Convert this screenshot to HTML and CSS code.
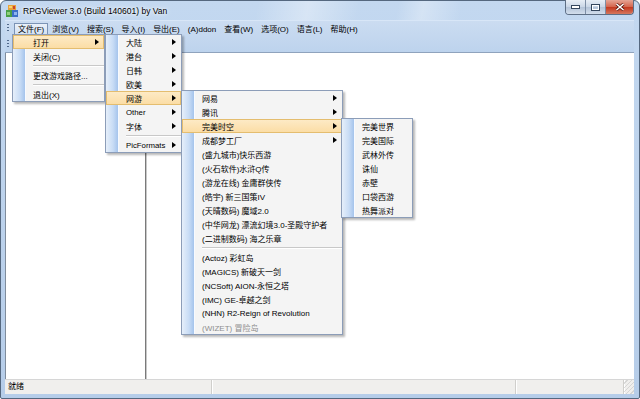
FILE: index.html
```html
<!DOCTYPE html>
<html lang="zh-CN">
<head>
    <meta charset="UTF-8">
    <title>RPGViewer 3.0</title>
    <link rel="stylesheet" href="styles.css">
</head>
<body>
    <div class="window">
        <div class="titlebar">
            <svg class="app-icon" width="14" height="14" viewBox="0 0 14 14">
                <rect x="3" y="1" width="8" height="5" fill="#e9a13b"/>
                <rect x="4" y="2" width="3" height="2" fill="#f7d36b"/>
                <rect x="8" y="2" width="2" height="3" fill="#c9462f"/>
                <rect x="1" y="6" width="6" height="7" fill="#4aa046"/>
                <rect x="7" y="6" width="6" height="7" fill="#3a6fc6"/>
                <rect x="2" y="8" width="3" height="3" fill="#8fd07c"/>
                <rect x="9" y="8" width="3" height="3" fill="#8db4ee"/>
            </svg>
            <span class="title">RPGViewer 3.0 (Build 140601) by Van</span>
            <div class="caption-buttons">
                <span class="cb cb-min">
                    <svg width="9" height="4" viewBox="0 0 9 4"><rect x="0.5" y="0.5" width="8" height="3" fill="#fff" stroke="#35475e" stroke-width="1"/></svg>
                </span>
                <span class="cb cb-max">
                    <svg width="9" height="7" viewBox="0 0 9 7"><rect x="0.5" y="0.5" width="8" height="6" fill="none" stroke="#35475e" stroke-width="1"/><rect x="1.5" y="1.5" width="6" height="4" fill="none" stroke="#fff" stroke-width="1"/></svg>
                </span>
                <span class="cb cb-close">
                    <svg width="10" height="8" viewBox="0 0 10 8"><path d="M1.5 1 L8.5 7 M8.5 1 L1.5 7" stroke="#5b1a12" stroke-width="3"/><path d="M1.5 1 L8.5 7 M8.5 1 L1.5 7" stroke="#fff" stroke-width="1.6"/></svg>
                </span>
            </div>
        </div>

        <div class="frame">
            <div class="rebar">
                <div class="band menubar">
                    <span class="grip"></span>
                    <span class="menu-title active">文件(F)</span>
                    <span class="menu-title">浏览(V)</span>
                    <span class="menu-title">搜索(S)</span>
                    <span class="menu-title">导入(I)</span>
                    <span class="menu-title">导出(E)</span>
                    <span class="menu-title">(A)ddon</span>
                    <span class="menu-title">查看(W)</span>
                    <span class="menu-title">选项(O)</span>
                    <span class="menu-title">语言(L)</span>
                    <span class="menu-title">帮助(H)</span>
                </div>
                <div class="band toolbar">
                    <span class="grip"></span>
                </div>
            </div>

            <div class="client">
                <div class="tree"></div>
                <div class="view"></div>
            </div>

            <div class="statusbar">
                <div class="pane pane-main">就绪</div>
                <div class="pane pane-mid"></div>
                <div class="pane pane-end"></div>
                <div class="sizegrip"></div>
            </div>
        </div>
    </div>

    <!-- 弹出菜单 -->
    <div class="popup menu-file">
        <div class="item hl">打开<i class="arrow"></i></div>
        <div class="item">关闭(C)</div>
        <div class="sep"></div>
        <div class="item">更改游戏路径...</div>
        <div class="sep"></div>
        <div class="item">退出(X)</div>
    </div>

    <div class="popup menu-open">
        <div class="item">大陆<i class="arrow"></i></div>
        <div class="item">港台<i class="arrow"></i></div>
        <div class="item">日韩<i class="arrow"></i></div>
        <div class="item">欧美<i class="arrow"></i></div>
        <div class="item hl">网游<i class="arrow"></i></div>
        <div class="item latin">Other<i class="arrow"></i></div>
        <div class="item">字体<i class="arrow"></i></div>
        <div class="sep"></div>
        <div class="item latin">PicFormats<i class="arrow"></i></div>
    </div>

    <div class="popup menu-online">
        <div class="item">网易<i class="arrow"></i></div>
        <div class="item">腾讯<i class="arrow"></i></div>
        <div class="item hl">完美时空<i class="arrow"></i></div>
        <div class="item">成都梦工厂<i class="arrow"></i></div>
        <div class="item">(盛九城市)快乐西游</div>
        <div class="item">(火石软件)水浒Q传</div>
        <div class="item">(游龙在线) 金庸群侠传</div>
        <div class="item">(皓宇) 新三国策IV</div>
        <div class="item">(天晴数码) 魔域2.0</div>
        <div class="item">(中华网龙) 漂流幻境3.0-圣殿守护者</div>
        <div class="item">(二进制数码) 海之乐章</div>
        <div class="sep"></div>
        <div class="item">(Actoz) 彩虹岛</div>
        <div class="item">(MAGICS) 新破天一剑</div>
        <div class="item">(NCSoft) AION-永恒之塔</div>
        <div class="item">(IMC) GE-卓越之剑</div>
        <div class="item">(NHN) R2-Reign of Revolution</div>
        <div class="item disabled">(WIZET) 冒险岛</div>
    </div>

    <div class="popup menu-wanmei">
        <div class="item">完美世界</div>
        <div class="item">完美国际</div>
        <div class="item">武林外传</div>
        <div class="item">诛仙</div>
        <div class="item">赤壁</div>
        <div class="item">口袋西游</div>
        <div class="item">热舞派对</div>
    </div>
</body>
</html>
```

FILE: styles.css
```css
* {
    box-sizing: border-box;
    margin: 0;
    padding: 0;
}

body {
    position: relative;
    width: 640px;
    height: 399px;
    overflow: hidden;
    background: #fff;
    font-family: "Liberation Sans", "Noto Sans CJK SC", sans-serif;
    font-size: 8px;
    color: #000;
}

.window {
    width: 640px;
    height: 399px;
    display: flex;
    flex-direction: column;
    border: 1px solid #55687f;
    border-radius: 6px 6px 2px 2px;
    background: linear-gradient(#c3d8f0, #b6cde9);
}

/* 标题栏 */
.titlebar {
    height: 19px;
    display: flex;
    align-items: center;
    padding-left: 4px;
    background:
        linear-gradient(100deg, transparent 40%, rgba(255,255,255,0.35) 48%, transparent 56%),
        linear-gradient(100deg, transparent 62%, rgba(255,255,255,0.3) 66%, transparent 72%);
}

.app-icon {
    margin-right: 4px;
}

.title {
    font-size: 8.5px;
    color: #000;
    text-shadow: 0 0 6px #fff, 0 0 3px #fff;
}

.caption-buttons {
    margin-left: auto;
    margin-right: 5px;
    align-self: flex-start;
    display: flex;
    height: 15px;
    margin-top: -1px;
    border: 1px solid #5e6f85;
    border-top: none;
    border-radius: 0 0 4px 4px;
    overflow: hidden;
}

.cb {
    display: flex;
    align-items: center;
    justify-content: center;
    height: 100%;
}

.cb-min,
.cb-max {
    width: 20px;
    background: linear-gradient(#e8eef6, #c9d6e6 50%, #b3c3d8 51%, #d2deec);
    border-right: 1px solid #7d8ea5;
}

.cb-close {
    width: 27px;
    background: linear-gradient(#e5a495, #d4644c 50%, #c3371e 51%, #d5785e);
}

/* 框架 */
.frame {
    flex: 1;
    display: flex;
    flex-direction: column;
    padding: 0 5px 4px 4px;
}

.rebar {
    height: 33px;
    background: linear-gradient(#cbdcf1, #bdd3ed);
    border-top: 1px solid #d8e6f7;
    border-bottom: 1px solid #8fa3bd;
}

.band {
    display: flex;
    align-items: center;
}

.menubar {
    height: 15px;
    padding-left: 2px;
}

.toolbar {
    height: 16px;
    padding-left: 2px;
}

.grip {
    width: 2px;
    height: 9px;
    margin-right: 5px;
    background: repeating-linear-gradient(#526a8c 0 1px, transparent 1px 3px);
}

.menu-title {
    height: 12px;
    line-height: 11px;
    padding: 0 3px;
    border: 1px solid transparent;
    white-space: nowrap;
}

.menu-title.active {
    border-color: #7b93b5;
    background: linear-gradient(#e9f0f9, #d5e2f2);
}

/* 客户区 */
.client {
    flex: 1;
    display: flex;
    background: #fff;
}

.tree {
    width: 141px;
    border-left: 1px solid #7f8c9c;
    border-right: 1px solid #7a7a7a;
    box-shadow: 1px 0 0 #c8c8c8;
}

.view {
    flex: 1;
}

/* 状态栏 */
.statusbar {
    height: 15px;
    display: flex;
    background: #f0efed;
    border-top: 1px solid #d6d6d6;
    line-height: 13px;
}

.pane {
    border-right: 1px solid #d0cfcc;
    box-shadow: 1px 0 0 #fff;
}

.pane-main {
    width: 207px;
    padding-left: 3px;
}

.pane-mid {
    width: 304px;
}

.pane-end {
    flex: 1;
}

.sizegrip {
    width: 10px;
    background: repeating-linear-gradient(135deg, transparent 0 2px, #c4c4c4 2px 3px);
    opacity: 0.6;
}

/* 弹出菜单 */
.popup {
    position: absolute;
    border: 1px solid #8c9db8;
    box-shadow: 2px 2px 2px rgba(0, 0, 0, 0.28);
    background: linear-gradient(to right, #e6effa 0, #c8dcf5 7px, #a5c4ec 12px, #f7faff 12px, #f7faff 13px, #f4f4f4 13px);
    white-space: nowrap;
}

.menu-file {
    left: 12px;
    top: 34px;
    width: 93px;
}

.menu-open {
    left: 105px;
    top: 34px;
    width: 77px;
}

.menu-online {
    left: 181px;
    top: 90px;
    width: 162px;
}

.menu-wanmei {
    left: 341px;
    top: 118px;
    width: 72px;
}

.item {
    height: 14px;
    display: flex;
    align-items: center;
    padding-left: 20px;
}

.item.latin {
    font-size: 7.8px;
}

.item.hl {
    background: linear-gradient(#fdebc8, #fbdca3);
    box-shadow: inset 0 0 0 1px #e4bd6f;
}

.item.disabled {
    color: #8e8e8e;
}

.arrow {
    margin-left: auto;
    margin-right: 5px;
    width: 0;
    height: 0;
    border-left: 4px solid #000;
    border-top: 3.5px solid transparent;
    border-bottom: 3.5px solid transparent;
}

.sep {
    height: 5px;
    margin-left: 20px;
    background: linear-gradient(transparent 2px, #c8c8c8 2px, #c8c8c8 3px, #fff 3px, #fff 4px, transparent 4px);
}
```
